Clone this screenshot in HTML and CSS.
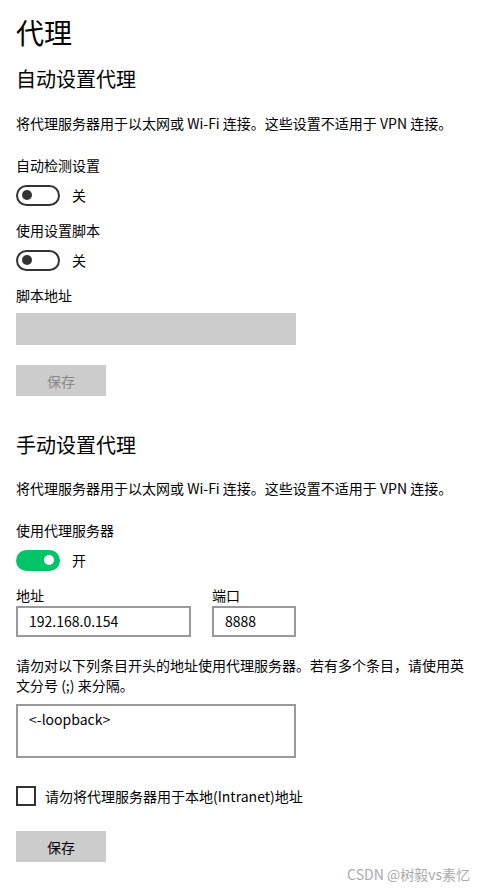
FILE: index.html
```html
<!DOCTYPE html>
<html lang="zh-CN">
<head>
    <meta charset="UTF-8">
    <meta name="viewport" content="width=device-width, initial-scale=1.0">
    <title>代理</title>
    <link rel="stylesheet" href="styles.css">
</head>
<body>
    <div class="page">
        <h1>代理</h1>

        <h2 class="first">自动设置代理</h2>
        <p class="desc">将代理服务器用于以太网或 Wi-Fi 连接。这些设置不适用于 VPN 连接。</p>

        <div class="label">自动检测设置</div>
        <div class="toggle-row">
            <span class="toggle"><span class="knob"></span></span>
            <span class="state">关</span>
        </div>

        <div class="label">使用设置脚本</div>
        <div class="toggle-row">
            <span class="toggle"><span class="knob"></span></span>
            <span class="state">关</span>
        </div>

        <div class="label">脚本地址</div>
        <div class="input disabled"></div>
        <button class="btn" disabled>保存</button>

        <h2 class="second">手动设置代理</h2>
        <p class="desc">将代理服务器用于以太网或 Wi-Fi 连接。这些设置不适用于 VPN 连接。</p>

        <div class="label">使用代理服务器</div>
        <div class="toggle-row">
            <span class="toggle on"><span class="knob"></span></span>
            <span class="state">开</span>
        </div>

        <div class="fields">
            <div class="field addr">
                <div class="field-label">地址</div>
                <div class="input box">192.168.0.154</div>
            </div>
            <div class="field port">
                <div class="field-label">端口</div>
                <div class="input box">8888</div>
            </div>
        </div>

        <p class="note">请勿对以下列条目开头的地址使用代理服务器。若有多个条目，请使用英文分号 (;) 来分隔。</p>
        <div class="textarea">&lt;-loopback&gt;</div>

        <label class="check">
            <span class="box-check"></span>
            <span>请勿将代理服务器用于本地(Intranet)地址</span>
        </label>

        <button class="btn active">保存</button>

        <div class="watermark">CSDN @树毅vs素忆</div>
    </div>
</body>
</html>
```

FILE: styles.css
```css
body {
    margin: 0;
    background-color: #fff;
    color: #000;
    font-family: "Noto Sans CJK SC", sans-serif;
    font-size: 14px;
    line-height: 20px;
}
.page {
    position: relative;
    width: 486px;
    height: 891px;
    padding-left: 16px;
    box-sizing: border-box;
    overflow: hidden;
}
h1 {
    margin: 0;
    padding-top: 14px;
    font-size: 28px;
    line-height: 36px;
    font-weight: normal;
}
h2 {
    margin: 0;
    font-size: 20px;
    line-height: 28px;
    font-weight: normal;
}
h2.first {
    margin-top: 15px;
}
h2.second {
    margin-top: 35px;
}
.desc {
    margin: 20px 0 0;
    white-space: nowrap;
}
h2.second + .desc {
    margin-top: 19px;
}
.label {
    margin-top: 15px;
}
.desc + .label {
    margin-top: 22px;
}
.toggle-row {
    display: flex;
    align-items: center;
    height: 20px;
    margin-top: 10px;
}
.toggle {
    position: relative;
    width: 44px;
    height: 21px;
    border: 2px solid #333;
    border-radius: 11px;
    box-sizing: border-box;
}
.toggle .knob {
    position: absolute;
    top: 3.5px;
    left: 4px;
    width: 10px;
    height: 10px;
    border-radius: 50%;
    background-color: #333;
}
.toggle.on {
    border-color: #00c468;
    background-color: #00c468;
}
.toggle.on .knob {
    left: auto;
    right: 4px;
    background-color: #fff;
}
.state {
    margin-left: 12px;
}
.input.disabled {
    width: 280px;
    height: 32px;
    margin-top: 8px;
    background-color: #ccc;
}
.btn {
    display: block;
    width: 90px;
    height: 31px;
    margin-top: 20px;
    padding: 0;
    border: none;
    background-color: #ccc;
    color: #888;
    font-family: inherit;
    font-size: 14px;
}
.btn.active {
    margin-top: 25px;
    color: #000;
}
.fields {
    display: flex;
    gap: 21px;
    margin-top: 15px;
}
.field-label {
    line-height: 20px;
}
.input.box {
    height: 31px;
    margin-top: 1px;
    padding: 0 11px;
    border: 2px solid #999;
    box-sizing: border-box;
    line-height: 27px;
}
.addr .input.box {
    width: 175px;
}
.port .input.box {
    width: 84px;
}
.note {
    width: 460px;
    margin: 18px 0 0;
}
.textarea {
    width: 280px;
    height: 54px;
    margin-top: 9px;
    padding: 3px 11px;
    border: 2px solid #999;
    box-sizing: border-box;
}
.check {
    display: flex;
    align-items: center;
    gap: 9px;
    height: 20px;
    margin-top: 28px;
}
.box-check {
    width: 20px;
    height: 20px;
    border: 2px solid #333;
    box-sizing: border-box;
}
.watermark {
    position: absolute;
    top: 864px;
    right: 16px;
    color: #aaa;
    font-size: 14px;
}
```
